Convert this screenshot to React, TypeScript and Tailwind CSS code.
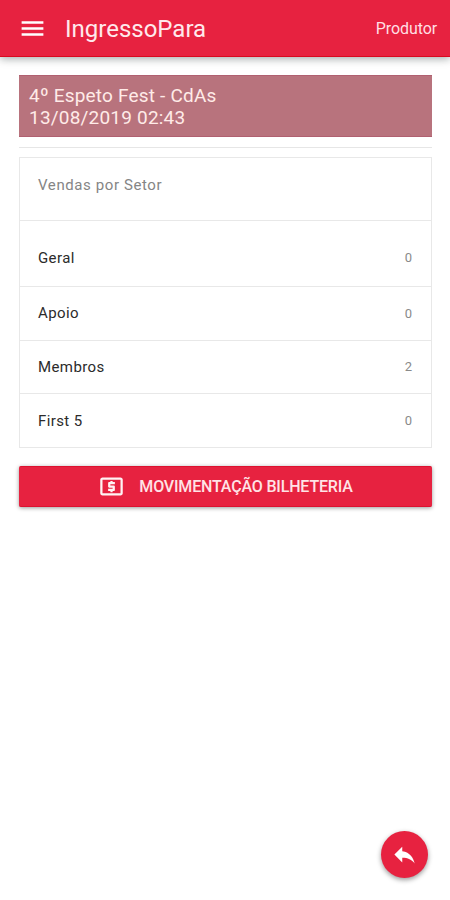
import { MdLocalAtm, MdMenu, MdReply } from "react-icons/md";

const sectors = [
  { name: "Geral", total: 0, row: "h-[65px] pt-[9px]" },
  { name: "Apoio", total: 0, row: "h-[54px]" },
  { name: "Membros", total: 2, row: "h-[53px]" },
  { name: "First 5", total: 0, row: "h-[54px] pt-px" },
];

function Header() {
  return (
    <header className="flex h-[57px] items-center border-b border-[#d9091f] bg-[#e72240] pl-[18px] pr-[13px] pt-px text-white shadow-[0_2px_8px_rgba(0,20,20,0.35)]">
      <button className="mr-[18px]" aria-label="Menu">
        <MdMenu size={29} />
      </button>
      <h1 className="pt-px text-[24px] leading-7 text-[#ffe9ec]">IngressoPara</h1>
      <span className="ml-auto pt-px text-[16px] tracking-[-0.1px] text-[#ffdfe3]">Produtor</span>
    </header>
  );
}

export default function App() {
  return (
    <div className="relative h-[900px] w-[450px] bg-white font-['Roboto','Liberation_Sans',sans-serif]">
      <Header />
      <main className="pl-[19px] pr-[18px] pt-[18px]">
        <div className="h-[62px] border-y border-[#b06070] bg-[#b8737d] pl-[10px] pt-[9px] text-[19px] leading-[22px] tracking-[0.2px] text-[#ffebe8]">
          <p>4º Espeto Fest - CdAs</p>
          <p>13/08/2019 02:43</p>
        </div>
        <hr className="mt-[10px] border-[#e6e6e6]" />
        <section className="mt-[9px] border border-[#e8e8e8]">
          <h2 className="h-[62px] pl-[18px] pt-[15px] text-[15px] leading-6 tracking-[0.6px] text-[#858585]">
            Vendas por Setor
          </h2>
          {sectors.map((sector) => (
            <div
              key={sector.name}
              className={`flex items-center justify-between border-t border-[#e8e8e8] pl-[18px] pr-[19px] first-of-type:h-[66px] ${sector.row}`}
            >
              <span className="text-[15px] tracking-[0.4px] text-[#2b2b2b]">{sector.name}</span>
              <span className="text-[13px] text-[#8a8a8a]">{sector.total}</span>
            </div>
          ))}
        </section>
        <button className="mt-[18px] flex h-[41px] w-full items-center justify-center gap-[14px] rounded-[2px] border-y border-[#dc1230] bg-[#e72240] text-[16px] font-medium tracking-[-0.17px] text-[#ffe3e6] shadow-[0_1px_4px_rgba(0,0,0,0.4)]">
          <MdLocalAtm size={27} className="text-[#fff3f4]" />
          MOVIMENTAÇÃO BILHETERIA
        </button>
      </main>
      <button
        className="absolute bottom-[22px] right-[22px] flex size-[47px] items-center justify-center rounded-full bg-[#e72240] text-white shadow-[0_2px_5px_rgba(0,0,0,0.4)]"
        aria-label="Voltar"
      >
        <MdReply size={27} />
      </button>
    </div>
  );
}
